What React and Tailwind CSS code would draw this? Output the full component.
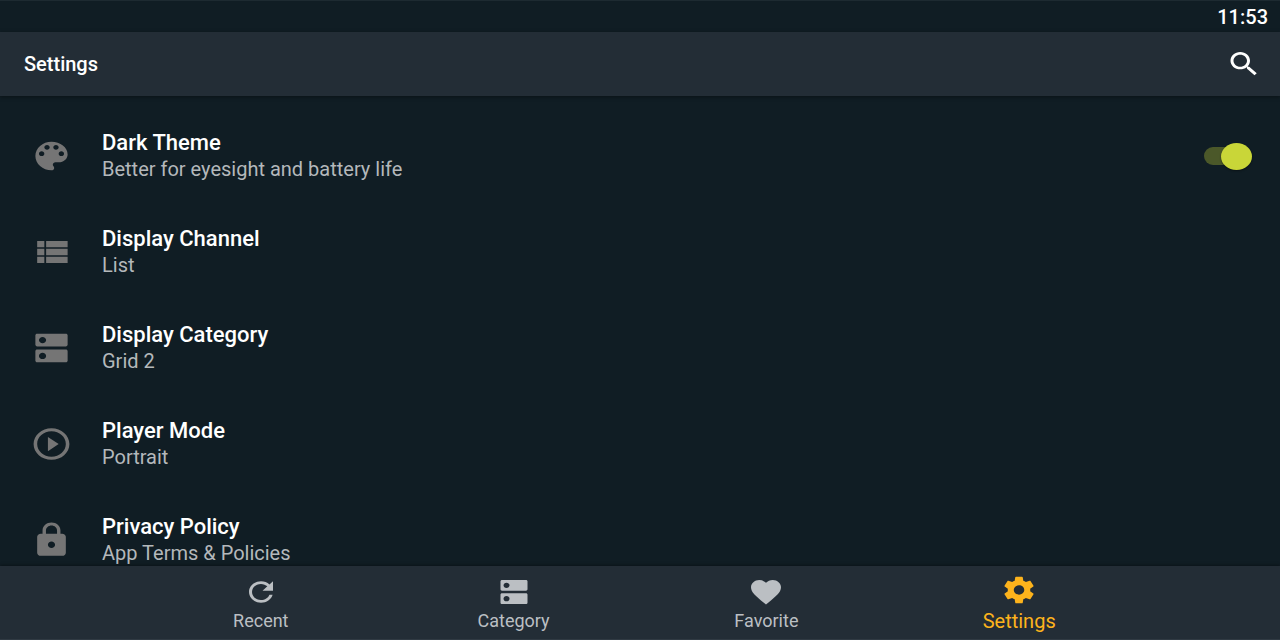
import { useState } from "react";

const paths = {
  palette:
    "M12 3c-4.97 0-9 4.03-9 9s4.03 9 9 9c.83 0 1.5-.67 1.5-1.5 0-.39-.15-.74-.39-1.01-.23-.26-.38-.61-.38-.99 0-.83.67-1.5 1.5-1.5H16c2.76 0 5-2.24 5-5 0-4.42-4.03-8-9-8zm-5.5 9c-.83 0-1.5-.67-1.5-1.5S5.670 9 6.500 9 8 9.670 8 10.500 7.330 12 6.500 12zm3-4C8.670 8 8 7.330 8 6.500S8.670 5 9.500 5s1.500.670 1.500 1.500S10.330 8 9.500 8zm5 0c-.830 0-1.500-.670-1.500-1.500S13.670 5 14.500 5s1.500.670 1.500 1.500S15.330 8 14.500 8zm3 4c-.830 0-1.500-.670-1.500-1.500S16.670 9 17.500 9s1.500.670 1.500 1.500-.670 1.500-1.500 1.500z",
  list: "M4 14h4v-4H4v4zm0 5h4v-4H4v4zM4 9h4V5H4v4zm5 5h12v-4H9v4zm0 5h12v-4H9v4zM9 5v4h12V5H9z",
  dns: "M20 13H4c-.55 0-1 .45-1 1v6c0 .55.45 1 1 1h16c.55 0 1-.45 1-1v-6c0-.55-.45-1-1-1zM7 19c-1.100 0-2-.9-2-2s.9-2 2-2 2 .9 2 2-.9 2-2 2zM20 3H4c-.55 0-1 .45-1 1v6c0 .55.45 1 1 1h16c.55 0 1-.45 1-1V4c0-.55-.45-1-1-1zM7 9c-1.100 0-2-.9-2-2s.9-2 2-2 2 .9 2 2-.9 2-2 2z",
  play: "M10 16.5l6-4.500-6-4.500v9zM12 2C6.480 2 2 6.480 2 12s4.480 10 10 10 10-4.480 10-10S17.520 2 12 2zm0 18c-4.410 0-8-3.590-8-8s3.590-8 8-8 8 3.590 8 8-3.590 8-8 8z",
  lock: "M18 8h-1V6c0-2.760-2.240-5-5-5S7 3.240 7 6v2H6c-1.100 0-2 .9-2 2v10c0 1.100.9 2 2 2h12c1.100 0 2-.9 2-2V10c0-1.100-.9-2-2-2zm-6 9c-1.100 0-2-.9-2-2s.9-2 2-2 2 .9 2 2-.9 2-2 2zm3.100-9H8.900V6c0-1.710 1.390-3.100 3.100-3.100 1.710 0 3.100 1.390 3.100 3.100v2z",
  search:
    "M15.5 14h-.79l-.28-.27C15.410 12.590 16 11.110 16 9.500 16 5.910 13.090 3 9.500 3S3 5.910 3 9.500 5.910 16 9.500 16c1.610 0 3.090-.59 4.230-1.570l.27.28v.79l5 4.990L20.490 19l-4.990-5zm-6 0C7.010 14 5 11.990 5 9.500S7.010 5 9.500 5 14 7.010 14 9.500 11.990 14 9.500 14z",
  refresh:
    "M17.650 6.350C16.200 4.900 14.210 4 12 4c-4.420 0-7.990 3.580-7.990 8s3.570 8 7.990 8c3.730 0 6.840-2.550 7.730-6h-2.080c-.82 2.330-3.040 4-5.650 4-3.310 0-6-2.690-6-6s2.690-6 6-6c1.660 0 3.140.69 4.220 1.780L13 11h7V4l-2.350 2.350z",
  heart:
    "M12 21.350l-1.450-1.320C5.400 15.360 2 12.280 2 8.500 2 5.420 4.420 3 7.500 3c1.740 0 3.410.81 4.500 2.090C13.090 3.810 14.760 3 16.500 3 19.580 3 22 5.420 22 8.500c0 3.780-3.400 6.860-8.550 11.540L12 21.350z",
  gear: "M19.430 12.980c.04-.32.07-.64.07-.98s-.03-.66-.07-.98l2.110-1.650c.19-.15.24-.42.12-.64l-2-3.460c-.12-.22-.39-.3-.61-.22l-2.490 1c-.52-.4-1.080-.73-1.690-.98l-.38-2.650C14.460 2.180 14.250 2 14 2h-4c-.25 0-.46.18-.49.42l-.38 2.650c-.61.25-1.170.59-1.690.98l-2.490-1c-.23-.09-.49 0-.61.22l-2 3.460c-.13.22-.07.49.12.64l2.110 1.650c-.04.32-.07.65-.07.98s.03.66.07.98l-2.110 1.650c-.19.15-.24.42-.12.64l2 3.460c.12.22.39.3.61.22l2.490-1c.52.4 1.080.73 1.690.98l.38 2.650c.03.24.24.42.49.42h4c.25 0 .46-.18.49-.42l.38-2.650c.61-.25 1.170-.59 1.690-.98l2.490 1c.23.09.49 0 .61-.22l2-3.460c.12-.22.07-.49-.12-.64l-2.110-1.650zM12 15.500c-1.930 0-3.500-1.570-3.500-3.500s1.570-3.500 3.500-3.500 3.500 1.570 3.500 3.500-1.570 3.500-3.500 3.500z",
};

function Icon({ name, className }) {
  return (
    <svg viewBox="0 0 24 24" preserveAspectRatio="none" fill="currentColor" className={className} aria-hidden="true">
      <path d={paths[name]} />
    </svg>
  );
}

const rows = [
  { icon: "list", title: "Display Channel", detail: "List" },
  { icon: "dns", title: "Display Category", detail: "Grid 2" },
  { icon: "play", title: "Player Mode", detail: "Portrait" },
  { icon: "lock", title: "Privacy Policy", detail: "App Terms & Policies" },
];

const tabs = [
  { icon: "refresh", label: "Recent" },
  { icon: "dns", label: "Category" },
  { icon: "heart", label: "Favorite" },
  { icon: "gear", label: "Settings", active: true },
];

function RowBody({ icon, title, detail }) {
  return (
    <>
      <Icon name={icon} className="h-[38px] w-[43px] shrink-0 text-[#757575]" />
      <span className="flex grow flex-col">
        <span className="text-[22px] leading-[27px] font-medium text-white">{title}</span>
        <span className="text-[20px] leading-[27px] text-[#b4b8bb]">{detail}</span>
      </span>
    </>
  );
}

export default function App() {
  const [dark, setDark] = useState(true);
  return (
    <div className="flex h-screen flex-col overflow-hidden bg-[#101d24] font-['Roboto',sans-serif]">
      <div className="flex h-8 shrink-0 items-center justify-end border-t border-[#1d2a31] px-3 text-[20px] leading-6 font-medium text-white">
        <time>11:53</time>
      </div>
      <header className="z-10 flex h-16 shrink-0 items-center justify-between bg-[#232d36] pr-[18px] pl-6 text-white shadow-[0_1px_4px_rgba(0,0,0,0.4)]">
        <h1 className="text-[20px] leading-6 font-medium">Settings</h1>
        <button type="button" aria-label="Search">
          <Icon name="search" className="h-8 w-9" />
        </button>
      </header>

      <main className="min-h-0 grow overflow-hidden pt-3">
        <label className="flex h-24 cursor-pointer items-center gap-[29px] pr-7 pl-[30px]">
          <RowBody icon="palette" title="Dark Theme" detail="Better for eyesight and battery life" />
          <input
            type="checkbox"
            role="switch"
            checked={dark}
            onChange={(e) => setDark(e.target.checked)}
            className="peer sr-only"
          />
          <span className="flex h-[18px] w-12 items-center rounded-full bg-[linear-gradient(#4b5829,#4b5829)] bg-[length:40px_18px] bg-no-repeat peer-checked:justify-end">
            <span className="h-[27px] w-[31px] shrink-0 rounded-[50%] bg-[#c9d638] shadow-[0_1px_2px_rgba(0,0,0,0.4)]" />
          </span>
        </label>
        {rows.map((row) => (
          <button key={row.title} type="button" className="flex h-24 w-full items-center gap-[29px] pr-7 pl-[30px] text-left">
            <RowBody {...row} />
          </button>
        ))}
      </main>

      <nav className="z-10 flex h-[74px] shrink-0 justify-center border-b border-[#303a43] bg-[#232d36] shadow-[0_-1px_3px_rgba(0,0,0,0.35)]">
        <div className="grid w-[79%] grid-cols-4">
          {tabs.map((tab) => (
            <a
              key={tab.label}
              href={"#" + tab.label.toLowerCase()}
              aria-current={tab.active ? "page" : undefined}
              className={
                tab.active
                  ? "flex flex-col items-center pt-2 text-[20px] leading-[30px] text-[#fdb31c]"
                  : "flex flex-col items-center pt-[10px] text-[18px] leading-[26px] text-[#bbbfc3]"
              }
            >
              <Icon name={tab.icon} className="h-8 w-9" />
              {tab.label}
            </a>
          ))}
        </div>
      </nav>
    </div>
  );
}
